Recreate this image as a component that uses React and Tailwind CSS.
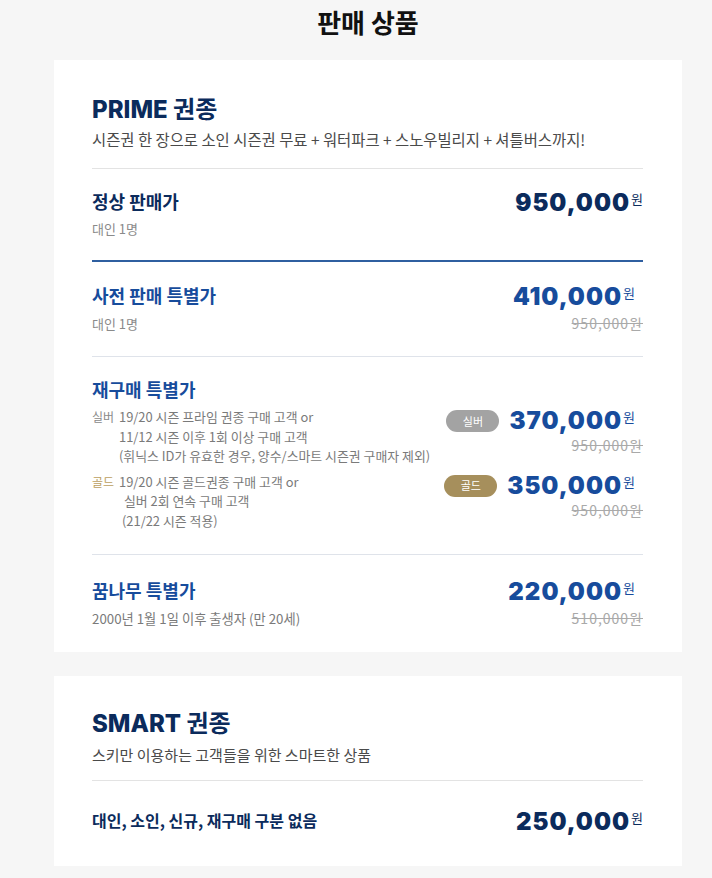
import React from "react";

const KR = { fontFamily: '"Noto Sans CJK KR", "Noto Sans", sans-serif' };
const NUM = { fontFamily: 'Inter, "Noto Sans CJK KR", sans-serif' };

function Price({ value, color = "text-[#0b2b5c]", blue = false }) {
  return (
    <div className={`flex items-start ${color} ${blue ? "mr-[8px]" : ""}`}>
      <span style={NUM} className="text-[24px] leading-[28px] font-black tracking-[1px]">{value}</span>
      <span style={KR} className="text-[13px] leading-[20px] ml-[1px] font-normal">원</span>
    </div>
  );
}

function Strike({ value }) {
  return (
    <div style={KR} className="text-[14px] leading-[18px] tracking-[1px] text-[#a9a9a9] line-through">{value}원</div>
  );
}

export default function App() {
  return (
    <div style={KR} className="bg-[#f6f6f6] min-h-[878px] w-[712px] pt-[6px] pb-[10px] pl-[54px] pr-[30px]">
      <div className="w-[628px]">
        <h1 className="text-center text-[26px] leading-[32px] font-bold text-[#111]">판매 상품</h1>

        {/* PRIME card */}
        <div className="mt-[22px] bg-white pl-[38px] pr-[39px] pt-[33px] pb-[24px]">
          <div className="text-[24px] leading-[30px] font-bold text-[#0b2b5c]">
            <span style={NUM} className="font-extrabold">PRIME</span> 권종
          </div>
          <div className="mt-[4px] text-[15.4px] leading-[20px] text-[#4a4a4a]">
            시즌권 한 장으로 소인 시즌권 무료 + 워터파크 + 스노우빌리지 + 셔틀버스까지!
          </div>
          <div className="mt-[19px] h-px bg-[#e3e3e3]" />

          {/* 정상 판매가 */}
          <div className="pt-[20px] pb-[22px] flex justify-between items-start">
            <div>
              <div className="text-[18px] leading-[24px] font-bold text-[#0b2b5c]">정상 판매가</div>
              <div className="mt-[7px] text-[13px] leading-[18px] text-[#8a8a8a]">대인 1명</div>
            </div>
            <Price value="950,000" />
          </div>
          <div className="h-[2px] bg-[#2f5fa0]" />

          {/* 사전 판매 특별가 */}
          <div className="pt-[21px] pb-[23px] flex justify-between items-start">
            <div>
              <div className="text-[18px] leading-[24px] font-bold text-[#174c9c]">사전 판매 특별가</div>
              <div className="mt-[8px] text-[13px] leading-[18px] text-[#8a8a8a]">대인 1명</div>
            </div>
            <div className="flex flex-col items-end">
              <Price value="410,000" color="text-[#174c9c]" blue />
              <div className="mt-[3px]"><Strike value="950,000" /></div>
            </div>
          </div>
          <div className="h-px bg-[#dfe3ea]" />

          {/* 재구매 특별가 */}
          <div className="pt-[20px] pb-[24px]">
            <div className="text-[18px] leading-[24px] font-bold text-[#174c9c]">재구매 특별가</div>
            <div className="mt-[6px] flex justify-between items-start">
              <div className="flex text-[12.9px] leading-[19.5px] text-[#7a7a7a]">
                <span className="w-[27px] shrink-0 text-[12px] text-[#8a8a8a]">실버</span>
                <div>
                  <div>19/20 시즌 프라임 권종 구매 고객 or</div>
                  <div>11/12 시즌 이후 1회 이상 구매 고객</div>
                  <div>(휘닉스 ID가 유효한 경우, 양수/스마트 시즌권 구매자 제외)</div>
                </div>
              </div>
              <div className="flex flex-col items-end">
                <div className="flex items-center">
                  <span className="w-[53px] h-[22px] rounded-full bg-[#a3a3a3] text-white text-[11px] flex items-center justify-center mr-[10px]">실버</span>
                  <Price value="370,000" color="text-[#174c9c]" blue />
                </div>
                <div className="mt-[1px]"><Strike value="950,000" /></div>
              </div>
            </div>
            <div className="mt-[6px] flex justify-between items-start">
              <div className="flex text-[12.9px] leading-[19.5px] text-[#7a7a7a]">
                <span className="w-[27px] shrink-0 text-[12px] text-[#bc9f5f]">골드</span>
                <div>
                  <div>19/20 시즌 골드권종 구매 고객 or</div>
                  <div className="pl-[5px]">실버 2회 연속 구매 고객</div>
                  <div className="pl-[3px]">(21/22 시즌 적용)</div>
                </div>
              </div>
              <div className="flex flex-col items-end">
                <div className="flex items-center">
                  <span className="w-[53px] h-[22px] rounded-full bg-[#a68f5c] text-white text-[11px] flex items-center justify-center mr-[10px]">골드</span>
                  <Price value="350,000" color="text-[#174c9c]" blue />
                </div>
                <div className="mt-[1px]"><Strike value="950,000" /></div>
              </div>
            </div>
          </div>
          <div className="h-px bg-[#dfe3ea]" />

          {/* 꿈나무 특별가 */}
          <div className="pt-[23px] flex justify-between items-start">
            <div>
              <div className="text-[18px] leading-[24px] font-bold text-[#174c9c]">꿈나무 특별가</div>
              <div className="mt-[8px] text-[13.3px] leading-[18px] text-[#7a7a7a]">2000년 1월 1일 이후 출생자 (만 20세)</div>
            </div>
            <div className="flex flex-col items-end">
              <Price value="220,000" color="text-[#174c9c]" blue />
              <div className="mt-[3px]"><Strike value="510,000" /></div>
            </div>
          </div>
        </div>

        {/* SMART card */}
        <div className="mt-[24px] bg-white pl-[38px] pr-[39px] pt-[31px] pb-[30px]">
          <div className="text-[24px] leading-[30px] font-bold text-[#0b2b5c]">
            <span style={NUM} className="font-extrabold">SMART</span> 권종
          </div>
          <div className="mt-[6px] text-[15px] leading-[20px] text-[#4a4a4a]">
            스키만 이용하는 고객들을 위한 스마트한 상품
          </div>
          <div className="mt-[15px] h-px bg-[#e3e3e3]" />
          <div className="pt-[27px] flex justify-between items-start">
            <div className="text-[16px] leading-[24px] font-bold text-[#0b2b5c]">대인, 소인, 신규, 재구매 구분 없음</div>
            <Price value="250,000" />
          </div>
        </div>
      </div>
    </div>
  );
}
